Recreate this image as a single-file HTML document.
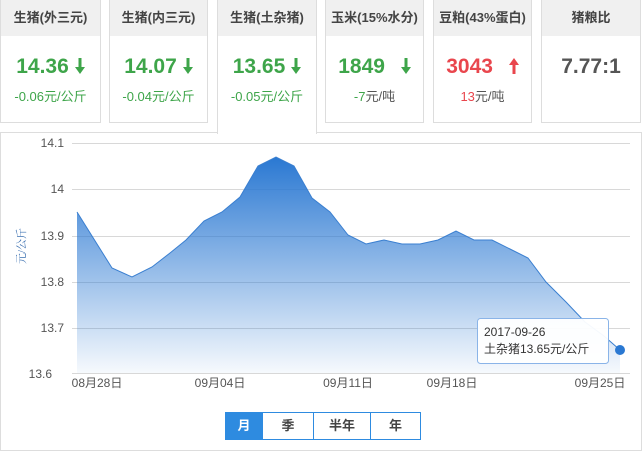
<!DOCTYPE html><html><head><meta charset="utf-8"><style>
body{margin:0;width:642px;height:451px;background:#fff;font-family:"Liberation Sans","Noto Sans CJK SC",sans-serif;position:relative;overflow:hidden}
.c{position:absolute;top:0;height:123px;border:1px solid #ddd;border-top:none;box-sizing:border-box;text-align:center;background:#fff}
.h{height:36px;background:#f0f0f0;line-height:36px;font-size:13px;color:#444;font-weight:bold}
.v{margin-top:18px;font-size:21px;font-weight:bold;color:#3ea54a;line-height:26px}
.v svg{margin-left:6px;vertical-align:-1px}
.s{font-size:13px;color:#3ea54a;margin-top:6px}
.r{color:#e9464d}
.panel{position:absolute;left:0;top:132px;width:642px;height:319px;border:1px solid #ddd;box-sizing:border-box}
.btns{position:absolute;left:225px;top:412px;height:28px;display:flex;border:1px solid #2e8be0;box-sizing:border-box}
.btns div{line-height:26px;font-size:13px;font-weight:bold;color:#444;text-align:center;border-left:1px solid #2e8be0}
</style></head><body>
<div class="panel"></div>
<div class="c" style="left:0;width:101px"><div class="h">生猪(外三元)</div><div class="v">14.36<svg width="10" height="16" viewBox="0 0 10 16"><path d="M3.5,0h3v9h3.5l-5,7l-5,-7h3.5z" fill="#3ea54a"/></svg></div><div class="s">-0.06元/公斤</div></div>
<div class="c" style="left:109px;width:99px"><div class="h">生猪(内三元)</div><div class="v">14.07<svg width="10" height="16" viewBox="0 0 10 16"><path d="M3.5,0h3v9h3.5l-5,7l-5,-7h3.5z" fill="#3ea54a"/></svg></div><div class="s">-0.04元/公斤</div></div>
<div class="c" style="left:217px;width:100px;height:134px;border-bottom:none;z-index:2"><div class="h">生猪(土杂猪)</div><div class="v">13.65<svg width="10" height="16" viewBox="0 0 10 16"><path d="M3.5,0h3v9h3.5l-5,7l-5,-7h3.5z" fill="#3ea54a"/></svg></div><div class="s">-0.05元/公斤</div></div>
<div class="c" style="left:325px;width:99px"><div class="h">玉米(15%水分)</div><div class="v">1849 <svg width="10" height="16" viewBox="0 0 10 16" style="margin-left:10px"><path d="M3.5,0h3v9h3.5l-5,7l-5,-7h3.5z" fill="#3ea54a"/></svg></div><div class="s">-7<span style="color:#555">元/吨</span></div></div>
<div class="c" style="left:433px;width:99px"><div class="h">豆粕(43%蛋白)</div><div class="v r">3043 <svg width="10" height="16" viewBox="0 0 10 16" style="margin-left:10px"><path d="M3.5,16h3v-9h3.5l-5,-7l-5,7h3.5z" fill="#e9464d"/></svg></div><div class="s r">13<span style="color:#555">元/吨</span></div></div>
<div class="c" style="left:541px;width:100px"><div class="h">猪粮比</div><div class="v" style="color:#555">7.77:1</div></div>
<svg style="position:absolute;left:0;top:0" width="642" height="451">
<defs><linearGradient id="g" x1="0" y1="0" x2="0" y2="1"><stop offset="0" stop-color="#2a78d2"/><stop offset="1" stop-color="#2a78d2" stop-opacity="0.04"/></linearGradient></defs>
<g stroke="#d8d8d8" stroke-width="1"><line x1="72" x2="630" y1="143.5" y2="143.5"/><line x1="72" x2="630" y1="189.5" y2="189.5"/><line x1="72" x2="630" y1="236.5" y2="236.5"/><line x1="72" x2="630" y1="282.5" y2="282.5"/><line x1="72" x2="630" y1="328.5" y2="328.5"/><line x1="72" x2="630" y1="373.5" y2="373.5"/></g>
<path d="M77,212 L112,268 L132,277 L152,267 L170,253 L186,240 L204,221 L222,212 L240,197 L258,166 L276,157 L294,166 L312,198 L330,212 L348,235 L366,244 L384,240 L402,244 L420,244 L438,240 L456,231 L474,240 L492,240 L510,249 L528,258 L546,282 L566,302 L585,322 L604,336 L620,350 L620,373 L77,373Z" fill="url(#g)" stroke="none"/>
<path d="M77,212 L112,268 L132,277 L152,267 L170,253 L186,240 L204,221 L222,212 L240,197 L258,166 L276,157 L294,166 L312,198 L330,212 L348,235 L366,244 L384,240 L402,244 L420,244 L438,240 L456,231 L474,240 L492,240 L510,249 L528,258 L546,282 L566,302 L585,322 L604,336 L620,350" fill="none" stroke="#3a7fd0" stroke-width="1"/>
<circle cx="620" cy="350" r="5" fill="#2a78d2"/>
<g font-size="12" fill="#555" text-anchor="end" font-family="Liberation Sans,sans-serif"><text x="64" y="147">14.1</text><text x="64" y="193">14</text><text x="64" y="240">13.9</text><text x="64" y="286">13.8</text><text x="64" y="332">13.7</text><text x="52" y="378">13.6</text></g>
<g font-size="12" fill="#555" text-anchor="middle"><text x="97" y="387">08月28日</text><text x="220" y="387">09月04日</text><text x="348" y="387">09月11日</text><text x="452" y="387">09月18日</text><text x="600" y="387">09月25日</text></g>
<text transform="translate(25,246) rotate(-90)" font-size="11" fill="#3a6fb0" text-anchor="middle" font-family="Liberation Serif,Noto Serif CJK SC,serif">元/公斤</text>
<rect x="477.5" y="318.5" width="131" height="45" rx="3" fill="#fff" fill-opacity="0.95" stroke="#8ab4e8"/>
<text x="484" y="336" font-size="12" fill="#333">2017-09-26</text><text x="484" y="353" font-size="12" fill="#333">土杂猪13.65元/公斤</text>
</svg>
<div class="btns"><div style="width:36px;background:#2e8be0;color:#fff;border-left:none">月</div><div style="width:50px">季</div><div style="width:56px">半年</div><div style="width:49px">年</div></div>
</body></html>
